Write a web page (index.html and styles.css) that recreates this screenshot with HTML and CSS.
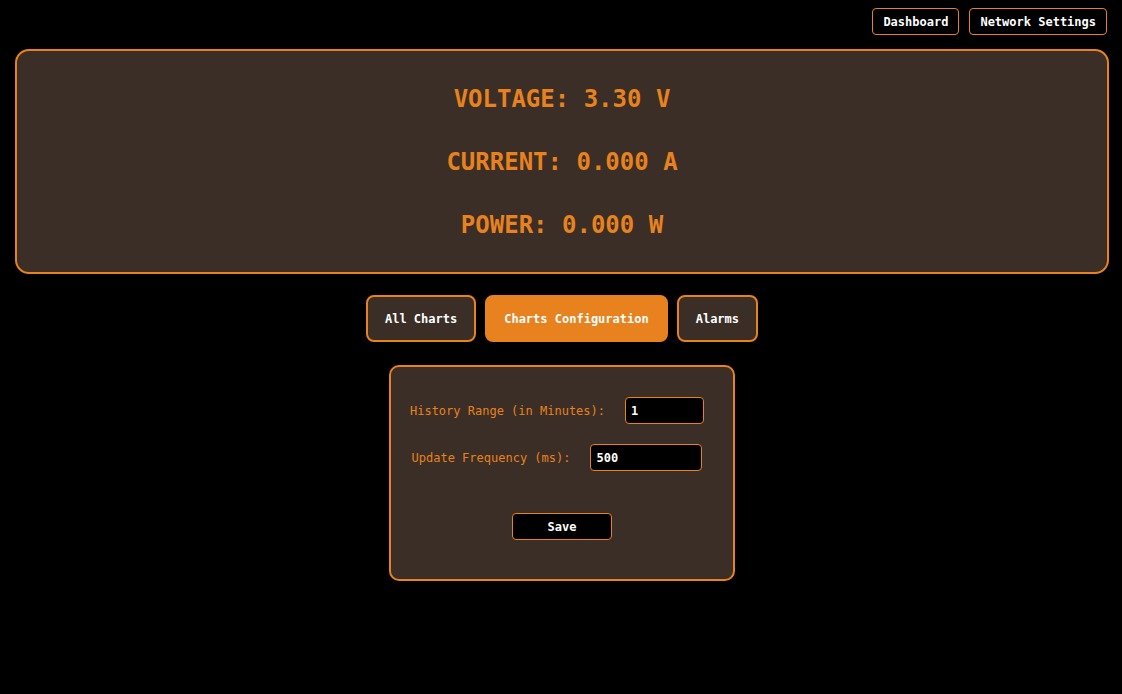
FILE: index.html
```html
<!DOCTYPE html>
<html>
<head>
<meta charset="utf-8">
<link rel="stylesheet" href="styles.css">
</head>
<body>
<nav class="topnav">
  <button class="navbtn">Dashboard</button>
  <button class="navbtn">Network Settings</button>
</nav>
<section class="readings">
  <div class="reading">VOLTAGE: 3.30 V</div>
  <div class="reading">CURRENT: 0.000 A</div>
  <div class="reading">POWER: 0.000 W</div>
</section>
<div class="tabs">
  <button class="tab">All Charts</button>
  <button class="tab active">Charts Configuration</button>
  <button class="tab">Alarms</button>
</div>
<section class="config">
  <div class="row">
    <label class="lbl">History Range (in Minutes):</label>
    <input class="field short" type="text" value="1">
  </div>
  <div class="row">
    <label class="lbl">Update Frequency (ms):</label>
    <input class="field long" type="text" value="500">
  </div>
  <div class="actions">
    <button class="save">Save</button>
  </div>
</section>
</body>
</html>
```
FILE: styles.css
```css
* { box-sizing: border-box; }
html, body { margin: 0; padding: 0; background: #000; }
body {
  font-family: "DejaVu Sans Mono", "Liberation Mono", monospace;
  color: #fff;
  padding: 8px 13px 0 15px;
}
.topnav {
  display: flex;
  justify-content: flex-end;
  gap: 10px;
  padding-right: 2px;
}
.navbtn {
  font-family: inherit;
  font-size: 12px;
  font-weight: bold;
  color: #fff;
  background: #000;
  border: 1px solid #e8821e;
  border-radius: 4px;
  height: 27px;
  padding: 0 10px;
}
.readings {
  margin-top: 14px;
  background: #3a2e26;
  border: 2px solid #e8821e;
  border-radius: 14px;
  padding: 16px 0;
}
.reading {
  height: 63px;
  line-height: 64px;
  text-align: center;
  color: #e8821e;
  font-size: 24px;
  font-weight: bold;
}
.tabs {
  margin-top: 21px;
  display: flex;
  justify-content: center;
  gap: 9px;
}
.tab {
  font-family: inherit;
  font-size: 12px;
  font-weight: bold;
  color: #fff;
  background: #3a2e26;
  border: 2px solid #e8821e;
  border-radius: 8px;
  height: 47px;
  padding: 0 17px;
}
.tab.active {
  background: #e8821e;
}
.config {
  margin: 23px auto 0;
  width: 346px;
  background: #3a2e26;
  border: 2px solid #e8821e;
  border-radius: 10px;
  padding: 30px 0 39px;
}
.row {
  display: flex;
  justify-content: center;
  align-items: center;
  gap: 20px;
  padding-right: 10px;
  height: 27px;
}
.row + .row { margin-top: 20px; }
.lbl {
  color: #e8821e;
  font-size: 12px;
}
.field {
  font-family: inherit;
  font-size: 12px;
  font-weight: bold;
  color: #fff;
  background: #000;
  border: 1px solid #e8821e;
  border-radius: 4px;
  height: 27px;
  padding: 0 5px;
}
.field.short { width: 79px; }
.field.long { width: 112px; }
.actions {
  margin-top: 42px;
  display: flex;
  justify-content: center;
}
.save {
  font-family: inherit;
  font-size: 12px;
  font-weight: bold;
  color: #fff;
  background: #000;
  border: 1px solid #e8821e;
  border-radius: 4px;
  width: 100px;
  height: 27px;
}
```
